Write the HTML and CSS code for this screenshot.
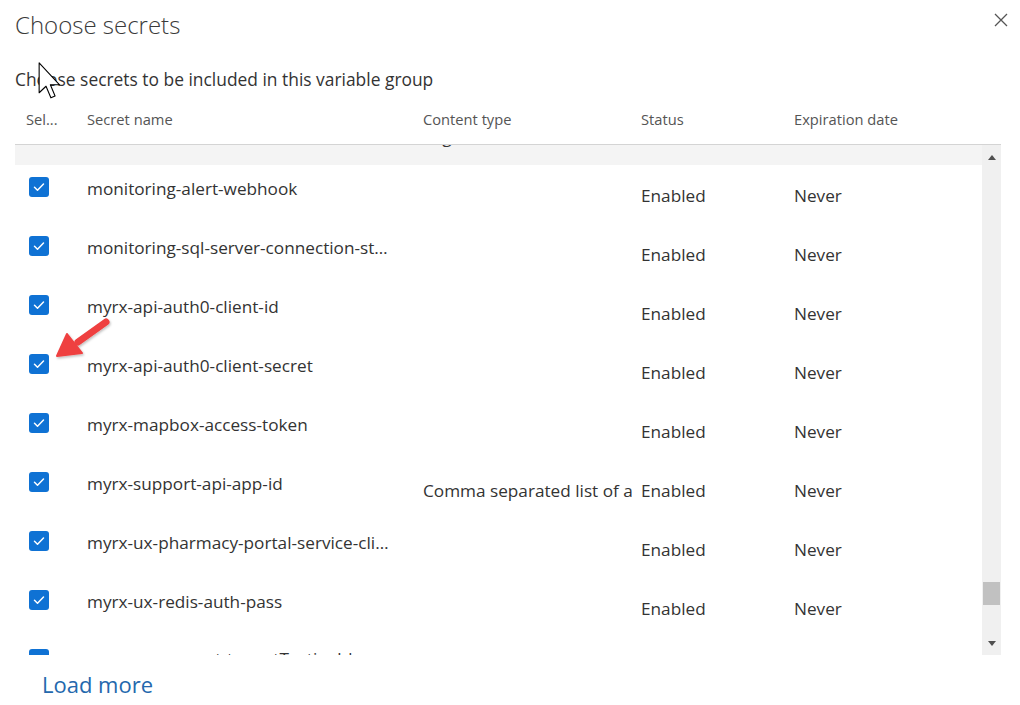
FILE: index.html
```html
<!DOCTYPE html>
<html lang="en">
<head>
<meta charset="utf-8">
<title>Choose secrets</title>
<link rel="stylesheet" href="styles.css">
</head>
<body>
<div class="dialog">
  <div class="dialog-head">
    <h1 class="title">Choose secrets</h1>
    <button class="close" aria-label="Close">
      <svg width="14" height="14" viewBox="0 0 14 14"><path d="M1 1L13 13M13 1L1 13" stroke="#555" stroke-width="1.3" fill="none"/></svg>
    </button>
  </div>
  <p class="subtitle">Choose secrets to be included in this variable group</p>

  <div class="table">
    <div class="thead">
      <div class="th">Sel...</div>
      <div class="th">Secret name</div>
      <div class="th">Content type</div>
      <div class="th">Status</div>
      <div class="th">Expiration date</div>
    </div>
    <div class="tbody-wrap">
      <div class="tbody">
        <div class="list">
          <div class="row hover">
            <div class="c-sel"><span class="cb"></span></div>
            <div class="c-name"></div>
            <div class="c-type">Logs</div>
            <div class="c-status"></div>
            <div class="c-exp"></div>
          </div>
          <div class="row">
            <div class="c-sel"><span class="cb on"></span></div>
            <div class="c-name">monitoring-alert-webhook</div>
            <div class="c-type"></div>
            <div class="c-status">Enabled</div>
            <div class="c-exp">Never</div>
          </div>
          <div class="row">
            <div class="c-sel"><span class="cb on"></span></div>
            <div class="c-name">monitoring-sql-server-connection-string</div>
            <div class="c-type"></div>
            <div class="c-status">Enabled</div>
            <div class="c-exp">Never</div>
          </div>
          <div class="row">
            <div class="c-sel"><span class="cb on"></span></div>
            <div class="c-name">myrx-api-auth0-client-id</div>
            <div class="c-type"></div>
            <div class="c-status">Enabled</div>
            <div class="c-exp">Never</div>
          </div>
          <div class="row">
            <div class="c-sel"><span class="cb on"></span></div>
            <div class="c-name">myrx-api-auth0-client-secret</div>
            <div class="c-type"></div>
            <div class="c-status">Enabled</div>
            <div class="c-exp">Never</div>
          </div>
          <div class="row">
            <div class="c-sel"><span class="cb on"></span></div>
            <div class="c-name">myrx-mapbox-access-token</div>
            <div class="c-type"></div>
            <div class="c-status">Enabled</div>
            <div class="c-exp">Never</div>
          </div>
          <div class="row">
            <div class="c-sel"><span class="cb on"></span></div>
            <div class="c-name">myrx-support-api-app-id</div>
            <div class="c-type">Comma separated list of allowed app ids</div>
            <div class="c-status">Enabled</div>
            <div class="c-exp">Never</div>
          </div>
          <div class="row">
            <div class="c-sel"><span class="cb on"></span></div>
            <div class="c-name">myrx-ux-pharmacy-portal-service-client-id</div>
            <div class="c-type"></div>
            <div class="c-status">Enabled</div>
            <div class="c-exp">Never</div>
          </div>
          <div class="row">
            <div class="c-sel"><span class="cb on"></span></div>
            <div class="c-name">myrx-ux-redis-auth-pass</div>
            <div class="c-type"></div>
            <div class="c-status">Enabled</div>
            <div class="c-exp">Never</div>
          </div>
          <div class="row">
            <div class="c-sel"><span class="cb on"></span></div>
            <div class="c-name last">myrx-ux-support-tenantTestingId</div>
            <div class="c-type"></div>
            <div class="c-status">Enabled</div>
            <div class="c-exp">Never</div>
          </div>
        </div>
      </div>
      <div class="scrollbar">
        <div class="sb-btn"><span class="tri up"></span></div>
        <div class="sb-track"><div class="sb-thumb"></div></div>
        <div class="sb-btn"><span class="tri down"></span></div>
      </div>
    </div>
  </div>

  <a class="load-more" href="#">Load more</a>

  <svg class="annot-arrow" width="120" height="60" viewBox="0 0 120 60">
    <defs>
      <filter id="sh" x="-20%" y="-20%" width="140%" height="140%">
        <feDropShadow dx="1" dy="1.5" stdDeviation="1.2" flood-color="#000" flood-opacity="0.25"/>
      </filter>
    </defs>
    <g filter="url(#sh)" fill="#ef4040" stroke="#ef4040" stroke-linejoin="round">
      <path d="M106 5 L78 25" stroke-width="7" stroke-linecap="round" fill="none"/>
      <polygon points="57,39 67,17 82,36" stroke-width="2"/>
    </g>
  </svg>

  <svg class="cursor" width="24" height="38" viewBox="0 0 13 21">
    <polygon points="0.5,0.5 0.5,17 4.3,13.4 7,19.8 9.3,18.8 6.7,12.6 11.8,12.6" fill="#fff" stroke="#000" stroke-width="0.6" stroke-linejoin="round"/>
  </svg>
</div>
</body>
</html>
```

FILE: styles.css
```css
* { box-sizing: border-box; }

html, body {
  margin: 0;
  background: #fff;
}

body {
  font-family: "Segoe UI", "Open Sans", "Noto Sans", sans-serif;
  color: #333;
}

.dialog {
  position: relative;
  width: 1020px;
  height: 705px;
  padding: 0 12px 0 15px;
  overflow: hidden;
}

.dialog-head {
  display: flex;
  justify-content: space-between;
  align-items: flex-start;
}

.title {
  margin: 0;
  padding-top: 9px;
  font-size: 24px;
  line-height: 32px;
  font-weight: 300;
  color: #3a3a3a;
}

.close {
  margin-top: 13px;
  padding: 0;
  width: 14px;
  height: 14px;
  border: 0;
  background: none;
  display: flex;
}

.subtitle {
  margin: 26px 0 0;
  font-size: 17.4px;
  line-height: 24px;
  color: #333;
}

.table {
  margin-top: 8px;
  margin-right: 7px;
}

.thead {
  display: grid;
  grid-template-columns: 61px 336px 218px 153px 1fr;
  padding-left: 11px;
  padding-bottom: 6px;
  height: 46px;
  align-items: center;
  border-bottom: 1px solid #d4d4d4;
  font-size: 14.7px;
  color: #555;
}

.tbody-wrap {
  display: flex;
  height: 510px;
  overflow: hidden;
}

.tbody {
  flex: 1;
  overflow: hidden;
}

.list {
  margin-top: -39px;
}

.row {
  display: grid;
  grid-template-columns: 61px 336px 218px 153px 1fr;
  padding-left: 11px;
  height: 59px;
  align-items: start;
  font-size: 17.2px;
  line-height: 20px;
  color: #333;
}

.row.hover { background: #f4f4f4; }

.c-sel { padding-top: 12px; padding-left: 3px; }

.cb {
  display: block;
  width: 20px;
  height: 20px;
  border-radius: 3px;
  border: 1px solid #8a8a8a;
  background: #fff;
}

.cb.on {
  border: 0;
  background: #0f72d4 url("data:image/svg+xml,%3Csvg xmlns='http://www.w3.org/2000/svg' width='20' height='20' viewBox='0 0 20 20'%3E%3Cpath d='M5.5 10.3l3 2.9 6-6.2' stroke='white' stroke-width='1.5' fill='none' stroke-linecap='round' stroke-linejoin='round'/%3E%3C/svg%3E") center / 20px 20px no-repeat;
}

.c-name {
  padding-top: 14px;
  padding-right: 29px;
  white-space: nowrap;
  overflow: hidden;
  text-overflow: ellipsis;
}

.c-name.last { padding-top: 12px; }

.c-type {
  padding-top: 21px;
  margin-right: 9px;
  white-space: nowrap;
  overflow: hidden;
}

.c-status, .c-exp {
  padding-top: 21px;
  white-space: nowrap;
}

.scrollbar {
  width: 19px;
  background: #f0f0f0;
  display: flex;
  flex-direction: column;
}

.sb-btn {
  height: 24px;
  display: flex;
  align-items: center;
  justify-content: center;
}

.tri {
  width: 0;
  height: 0;
  border-left: 4.5px solid transparent;
  border-right: 4.5px solid transparent;
}
.tri.up { border-bottom: 5px solid #505050; }
.tri.down { border-top: 5px solid #505050; }

.sb-track {
  flex: 1;
  padding-top: 413px;
  padding-left: 1px;
  padding-right: 1px;
}

.sb-thumb {
  height: 23px;
  background: #c1c1c1;
}

.load-more {
  display: inline-block;
  margin-top: 14px;
  margin-left: 27px;
  font-size: 22px;
  line-height: 30px;
  color: #2468ad;
  text-decoration: none;
}

.annot-arrow {
  position: absolute;
  left: 0;
  top: 317px;
  pointer-events: none;
}

.cursor {
  position: absolute;
  left: 38px;
  top: 62px;
  pointer-events: none;
}
```
